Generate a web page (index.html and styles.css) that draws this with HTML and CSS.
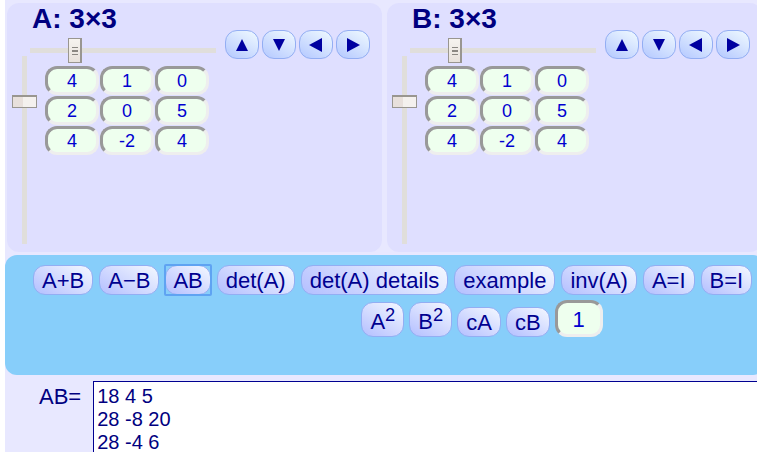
FILE: index.html
```html
<!DOCTYPE html>
<html lang="en">
<head>
<meta charset="utf-8">
<title>Matrix calculator</title>
<link rel="stylesheet" href="styles.css">
</head>
<body>
<main class="page">
  <div class="matrices">
    <section class="panel">
      <h2 class="title">A: 3×3</h2>
      <div class="top">
        <input class="slider-x" type="range" min="1" max="10" value="3" aria-label="Columns of A">
        <div class="arrows">
          <button class="btn arrow" aria-label="Shift A up"><svg viewBox="0 0 14 14"><path d="M7 1 13 13H1z"/></svg></button>
          <button class="btn arrow" aria-label="Shift A down"><svg viewBox="0 0 14 14"><path d="M7 13 1 1h12z"/></svg></button>
          <button class="btn arrow" aria-label="Shift A left"><svg viewBox="0 0 14 14"><path d="M0 7 13 0v14z"/></svg></button>
          <button class="btn arrow" aria-label="Shift A right"><svg viewBox="0 0 14 14"><path d="M14 7 1 14V0z"/></svg></button>
        </div>
      </div>
      <div class="body">
        <input class="slider-y" type="range" min="1" max="10" value="3" aria-label="Rows of A">
        <div class="cells">
          <input class="cell" value="4" aria-label="A 1,1"><input class="cell" value="1" aria-label="A 1,2"><input class="cell" value="0" aria-label="A 1,3">
          <input class="cell" value="2" aria-label="A 2,1"><input class="cell" value="0" aria-label="A 2,2"><input class="cell" value="5" aria-label="A 2,3">
          <input class="cell" value="4" aria-label="A 3,1"><input class="cell" value="-2" aria-label="A 3,2"><input class="cell" value="4" aria-label="A 3,3">
        </div>
      </div>
    </section>
    <section class="panel">
      <h2 class="title">B: 3×3</h2>
      <div class="top">
        <input class="slider-x" type="range" min="1" max="10" value="3" aria-label="Columns of B">
        <div class="arrows">
          <button class="btn arrow" aria-label="Shift B up"><svg viewBox="0 0 14 14"><path d="M7 1 13 13H1z"/></svg></button>
          <button class="btn arrow" aria-label="Shift B down"><svg viewBox="0 0 14 14"><path d="M7 13 1 1h12z"/></svg></button>
          <button class="btn arrow" aria-label="Shift B left"><svg viewBox="0 0 14 14"><path d="M0 7 13 0v14z"/></svg></button>
          <button class="btn arrow" aria-label="Shift B right"><svg viewBox="0 0 14 14"><path d="M14 7 1 14V0z"/></svg></button>
        </div>
      </div>
      <div class="body">
        <input class="slider-y" type="range" min="1" max="10" value="3" aria-label="Rows of B">
        <div class="cells">
          <input class="cell" value="4" aria-label="B 1,1"><input class="cell" value="1" aria-label="B 1,2"><input class="cell" value="0" aria-label="B 1,3">
          <input class="cell" value="2" aria-label="B 2,1"><input class="cell" value="0" aria-label="B 2,2"><input class="cell" value="5" aria-label="B 2,3">
          <input class="cell" value="4" aria-label="B 3,1"><input class="cell" value="-2" aria-label="B 3,2"><input class="cell" value="4" aria-label="B 3,3">
        </div>
      </div>
    </section>
  </div>

  <div class="toolbar">
    <div class="row">
      <button class="btn op">A+B</button>
      <button class="btn op">A−B</button>
      <button class="btn op active">AB</button>
      <button class="btn op">det(A)</button>
      <button class="btn op">det(A) details</button>
      <button class="btn op">example</button>
      <button class="btn op">inv(A)</button>
      <button class="btn op">A=I</button>
      <button class="btn op">B=I</button>
    </div>
    <div class="row row-more">
      <button class="btn op power">A<sup>2</sup></button>
      <button class="btn op power">B<sup>2</sup></button>
      <button class="btn op">cA</button>
      <button class="btn op">cB</button>
      <input class="cell scalar" value="1" aria-label="Scalar c">
    </div>
  </div>

  <div class="result">
    <label class="result-label" for="out">AB=</label>
    <textarea class="output" id="out" rows="6">18 4 5
28 -8 20
28 -4 6</textarea>
  </div>
</main>
</body>
</html>
```
FILE: styles.css
```css
* {
  box-sizing: border-box;
}

body {
  margin: 0;
  padding-left: 5px;
  overflow: hidden;
  background: #fff;
  color: #000080;
  font-family: "Liberation Sans", Arial, sans-serif;
}

.page {
  height: 100vh;
  margin-right: -8px;
  padding-top: 3px;
  overflow: hidden;
  background: #e8e8ff;
}

.matrices {
  display: grid;
  grid-template-columns: 1fr 1fr;
  gap: 5px;
  padding: 0 3px 3px 2px;
}

.panel {
  padding: 0 12px 8px 5px;
  border-radius: 12px;
  background: #dfdfff;
}

.title {
  margin: 0;
  padding-left: 20px;
  font-size: 28px;
  line-height: 32px;
}

.top {
  display: flex;
  align-items: flex-start;
  gap: 9px;
  height: 21px;
  padding-left: 18px;
}

.slider-x,
.slider-y {
  appearance: none;
  margin: 0;
  background: transparent;
}

.slider-x {
  width: 186px;
  height: 25px;
  margin-top: 3px;
}

.slider-x::-webkit-slider-runnable-track {
  height: 5px;
  background: #e0dedb;
}

.slider-x::-webkit-slider-thumb {
  appearance: none;
  width: 14px;
  height: 25px;
  margin-top: -10px;
  border: 1px solid #999690;
  border-right-width: 2px;
  background:
    linear-gradient(#8b8883, #8b8883) center 8px / 6px 1px no-repeat,
    linear-gradient(#8b8883, #8b8883) center 11px / 6px 2px no-repeat,
    linear-gradient(#8b8883, #8b8883) center 15px / 6px 1px no-repeat,
    linear-gradient(#f6f3ef, #e8e2dc);
}

.slider-y {
  writing-mode: vertical-lr;
  width: 25px;
  height: 188px;
}

.slider-y::-webkit-slider-runnable-track {
  width: 5px;
  height: 188px;
  background: #e0dedb;
}

.slider-y::-webkit-slider-thumb {
  appearance: none;
  width: 25px;
  height: 13px;
  margin-left: -10px;
  border: 1px solid #999690;
  border-top-width: 2px;
  background: linear-gradient(90deg, #e8e0dc 10px, #f4f1ee 10px);
}

.arrows {
  display: flex;
  flex: none;
  gap: 3px;
  margin-top: -5px;
}

.btn {
  border: 1px solid #93aef3;
  border-radius: 12px;
  background: linear-gradient(30deg, #b4bfff, #f4f8ff);
  color: #000090;
  font-family: inherit;
}

.arrow {
  width: 34px;
  height: 29px;
  padding: 0 9px;
  background: linear-gradient(30deg, #b4c8ff, #f0faff);
}

.arrow svg {
  display: block;
  width: 14px;
  height: 14px;
  fill: #0000a0;
}

.body {
  display: flex;
  gap: 8px;
}

.cells {
  display: grid;
  grid-template-columns: repeat(3, 54px);
  grid-auto-rows: 29px;
  gap: 1px;
  padding-top: 10px;
}

.cell {
  width: 100%;
  min-width: 0;
  padding: 2px 0 0;
  border: 3px solid;
  border-color: #999 #eee #eee #999;
  border-radius: 12px;
  background: #eeffee;
  color: #0000d0;
  font-family: inherit;
  font-size: 18px;
  text-align: center;
}

.toolbar {
  min-height: 120px;
  padding: 10px 10px 0 28px;
  border-radius: 12px;
  background: #87cefa;
}

.row {
  display: flex;
  gap: 6px;
}

.row-more {
  align-items: flex-end;
  justify-content: center;
  gap: 5px;
  margin-top: 5px;
  padding-left: 176px;
}

.op {
  flex: none;
  height: 30px;
  padding: 1px 8px 0;
  font-size: 22px;
  line-height: 28px;
}

.active {
  position: relative;
  padding: 1px 7px 0;
}

.active::after {
  content: "";
  position: absolute;
  inset: -2px;
  border: 2px solid #5fa3f2;
  border-radius: 2px;
}

.power {
  height: 35px;
  padding-top: 4px;
}

.power sup {
  line-height: 0;
}

.scalar {
  width: 48px;
  height: 37px;
  font-size: 22px;
}

.result {
  display: flex;
  align-items: flex-start;
  gap: 12px;
  padding: 6px 0 0 34px;
}

.result-label {
  font-size: 22px;
  line-height: 31px;
}

.output {
  flex: 1;
  min-width: 0;
  padding: 3px;
  border: 1px solid #000090;
  background: #fff;
  color: #000080;
  font-family: inherit;
  font-size: 20px;
  line-height: 23px;
  resize: none;
}
```
